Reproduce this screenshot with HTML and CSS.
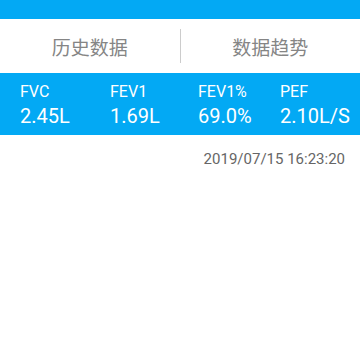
FILE: index.html
```html
<!DOCTYPE html>
<html lang="zh">
<head>
    <meta charset="UTF-8">
    <title>肺功能数据</title>
    <link rel="stylesheet" href="styles.css">
</head>
<body>

<div class="topbar"></div>

<div class="tabs">
    <div class="tab">历史数据</div>
    <div class="tab-line"></div>
    <div class="tab">数据趋势</div>
</div>

<div class="data-band">
    <div class="item">
        <div class="name">FVC</div>
        <div class="value">2.45L</div>
    </div>
    <div class="item">
        <div class="name">FEV1</div>
        <div class="value">1.69L</div>
    </div>
    <div class="item">
        <div class="name">FEV1%</div>
        <div class="value">69.0%</div>
    </div>
    <div class="item last">
        <div class="name">PEF</div>
        <div class="value">2.10L/S</div>
    </div>
</div>

<div class="time">2019/07/15 16:23:20</div>

</body>
</html>
```

FILE: styles.css
```css
body {
    margin: 0;
    font-family: Roboto, "Noto Sans CJK SC", sans-serif;
    background: #fff;
    color: #333;
}
.topbar {
    height: 19px;
    background: #03a9f4;
}
.tabs {
    display: flex;
    align-items: center;
    height: 54px;
}
.tab {
    flex: 1;
    text-align: center;
    font-size: 19px;
    color: #858585;
}
.tab-line {
    width: 1px;
    height: 34px;
    background: #ccc;
}
.data-band {
    display: flex;
    background: #03a9f4;
    color: #fff;
    height: 62px;
    padding: 9px 0 0 20px;
    box-sizing: border-box;
}
.item {
    width: 90px;
    flex-shrink: 0;
}
.item:nth-child(2) {
    width: 88px;
}
.item:nth-child(3) {
    width: 82px;
}
.item.last {
    width: auto;
    flex: 1;
    white-space: nowrap;
}
.name {
    font-size: 16px;
    line-height: 19px;
}
.value {
    font-size: 20px;
    line-height: 26px;
    margin-top: 2px;
}
.time {
    text-align: right;
    padding: 15px 15px 0 0;
    font-size: 15px;
    color: #666;
}
```
